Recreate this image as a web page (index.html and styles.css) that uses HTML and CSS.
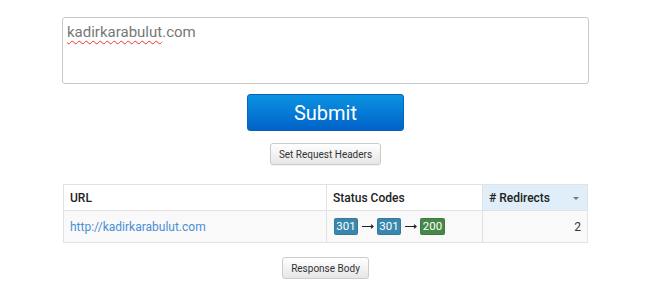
FILE: index.html
```html
<!DOCTYPE html>
<html lang="en">
<head>
  <meta charset="UTF-8">
  <title>Redirect Checker</title>
  <link rel="stylesheet" href="styles.css">
</head>
<body>
  <div class="container">
    <div class="url-box"><span class="misspelled">kadirkarabulut</span>.com</div>

    <div class="actions">
      <button class="btn-submit">Submit</button>
      <button class="btn">Set Request Headers</button>
    </div>

    <table class="results">
      <tr>
        <th class="col-url">URL</th>
        <th class="col-codes">Status Codes</th>
        <th class="col-redirects sorted"># Redirects <span class="caret"></span></th>
      </tr>
      <tr>
        <td><a href="#">http://kadirkarabulut.com</a></td>
        <td>
          <div class="chain">
            <span class="label info">301</span>
            <svg class="arrow" width="13" height="7" viewBox="0 0 13 7"><path d="M1 3.5H12M10 1.8L12.2 3.5L10 5.2" fill="none" stroke="#222" stroke-width="1.1"/></svg>
            <span class="label info">301</span>
            <svg class="arrow" width="13" height="7" viewBox="0 0 13 7"><path d="M1 3.5H12M10 1.8L12.2 3.5L10 5.2" fill="none" stroke="#222" stroke-width="1.1"/></svg>
            <span class="label success">200</span>
          </div>
        </td>
        <td class="num">2</td>
      </tr>
    </table>

    <div class="actions bottom">
      <button class="btn">Response Body</button>
    </div>
  </div>
</body>
</html>
```

FILE: styles.css
```css
body {
  font-family: Roboto, "Liberation Sans", Arial, sans-serif;
  background: #fff;
  margin: 0;
  padding: 17px 0 0 0;
  color: #333;
}

.container {
  width: 527px;
  margin: 0 auto;
  padding-left: 1px;
}

.url-box {
  box-sizing: border-box;
  height: 67px;
  border: 1px solid #c8c8c8;
  border-radius: 3px;
  padding: 5px 4px;
  font-size: 15px;
  color: #777;
}

.misspelled {
  text-decoration: underline wavy #e33;
  text-decoration-thickness: 1px;
  text-underline-offset: 3px;
}

.actions {
  display: flex;
  flex-direction: column;
  align-items: center;
  gap: 12px;
  margin-top: 10px;
}

.btn-submit {
  width: 157px;
  height: 37px;
  border: 1px solid #0a62b8;
  border-radius: 3px;
  background: linear-gradient(#0b93e2, #0062c8);
  color: #fff;
  font-family: inherit;
  font-size: 20px;
  cursor: pointer;
}

.btn {
  height: 22px;
  padding: 0 8px;
  border: 1px solid #ccc;
  border-radius: 3px;
  background: linear-gradient(#fff, #e6e6e6);
  color: #333;
  font-family: inherit;
  font-size: 10px;
  box-shadow: 0 1px 1px rgba(0,0,0,0.06);
  cursor: pointer;
}

.results {
  width: 525px;
  margin: 19px auto 0;
  border-collapse: collapse;
  font-size: 12px;
  border: 1px solid #e2e2e2;
}

.results th {
  height: 25px;
  padding: 0 6px;
  text-align: left;
  font-weight: 500;
  color: #222;
  background: #fff;
  border: 1px solid #e2e2e2;
}

.results td {
  height: 31px;
  padding: 0 6px;
  background: #f9f9f9;
  border: 1px solid #e2e2e2;
}

.col-url { width: 250px; }
.col-codes { width: 143px; }

.results th.sorted {
  background: #dfeef8;
  position: relative;
}

.caret {
  position: absolute;
  right: 8px;
  top: 12px;
  border-left: 3px solid transparent;
  border-right: 3px solid transparent;
  border-top: 3px solid #777;
}

.results a {
  color: #4a8fd6;
  text-decoration: none;
}

.num { text-align: right; }

.chain {
  display: flex;
  align-items: center;
  gap: 3px;
  padding-left: 1px;
}

.label {
  display: block;
  width: 24px;
  height: 17px;
  text-align: center;
  border-radius: 2px;
  color: #fff;
  font-size: 11.5px;
  line-height: 17px;
  box-shadow: inset 0 0 0 1px rgba(0,0,0,0.1);
}

.label.info { background: #3a87ad; }
.label.success { background: #468847; width: 25px; }

.arrow { display: block; }

.bottom { margin-top: 14px; }
```
